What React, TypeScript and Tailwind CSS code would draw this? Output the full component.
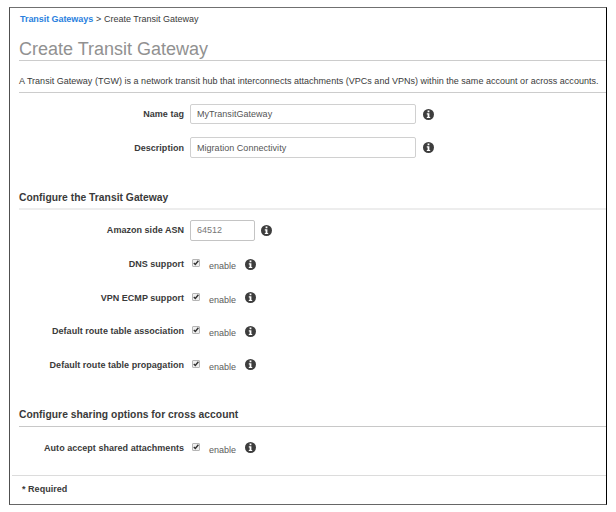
import type { ReactNode } from "react";

function InfoIcon({ className = "" }: { className?: string }) {
  return (
    <svg viewBox="0 0 11 11" className={`h-[11px] w-[11px] shrink-0 ${className}`} aria-label="Info">
      <circle cx="5.5" cy="5.5" r="5.5" fill="#3d3d3d" />
      <path d="M4.6 1.6h1.8v1.6H4.6zM3.8 4.2h2.6v3.7h.8v1.2H3.8V7.9h.8V5.4h-.8z" fill="#fff" />
    </svg>
  );
}

function Row({ label, height = "h-[20px]", children }: { label: string; height?: string; children: ReactNode }) {
  return (
    <div className={`flex items-center ${height}`}>
      <div className="w-[174px] shrink-0 text-right font-bold tracking-[0.03px]">{label}</div>
      <div className="ml-[6px] flex h-full items-center">{children}</div>
    </div>
  );
}

function TextRow({ label, value, height }: { label: string; value: string; height?: string }) {
  return (
    <Row label={label} height={height}>
      <div className="flex h-full w-[226px] items-center rounded-[2px] border border-[#d0d0d0] pl-[6px] tracking-[0.03px] text-[#555]">
        {value}
      </div>
      <InfoIcon className="ml-[7px]" />
    </Row>
  );
}

function CheckRow({ label }: { label: string }) {
  return (
    <Row label={label}>
      <svg viewBox="0 0 8 8" className="mb-[2px] ml-[2px] h-[8px] w-[8px] shrink-0">
        <rect x=".5" y=".5" width="7" height="7" rx=".5" fill="#efefef" stroke="#b5b5b5" />
        <path d="M1.8 4.1 3.3 5.5 6.4 1.8" fill="none" stroke="#303030" strokeWidth="1.4" />
      </svg>
      <span className="relative top-[2px] ml-[9px] w-[27px] text-[#5c5c5c]">enable</span>
      <InfoIcon className="ml-[9px]" />
    </Row>
  );
}

export default function App() {
  return (
    <div className="h-[512px] w-[616px] overflow-hidden bg-white pl-[9px] pt-[7px]">
      <main className="h-[498px] w-[598px] border border-t-[#707070] border-r-black border-b-[#666] border-l-[#505050] font-['Liberation_Sans',Arial,sans-serif] text-[9px] leading-[12px] whitespace-nowrap text-[#3a3a3a]">
        <nav className="ml-[10px] flex h-[22px] items-center">
          <a className="w-[76px] font-bold tracking-[-0.06px] text-[#2a7fde]">Transit Gateways</a>
          <span className="w-[8px]">&gt;</span>
          <span>Create Transit Gateway</span>
        </nav>
        <h1 className="ml-[9px] flex h-[31px] items-center border-b border-[#ccc] pt-[7px] text-[18px] text-[#919191]">
          Create Transit Gateway
        </h1>
        <p className="ml-[9px] flex h-[32px] items-center border-b border-[#ccc] pt-[8px] tracking-[0.02px]">
          A Transit Gateway (TGW) is a network transit hub that interconnects attachments (VPCs and VPNs) within the same account or across accounts.
        </p>
        <section className="flex flex-col gap-[13px] pt-[11px]">
          <TextRow label="Name tag" value="MyTransitGateway" />
          <TextRow label="Description" value="Migration Connectivity" height="h-[21px]" />
        </section>
        <h2 className="mt-[32px] ml-[9px] h-[20px] border-b-2 border-[#ededed] pt-[2px] text-[10.3px] font-bold tracking-[0.02px]">
          Configure the Transit Gateway
        </h2>
        <section className="flex flex-col gap-[13.5px] pt-[10px]">
          <Row label="Amazon side ASN" height="h-[20.7px]">
            <div className="flex h-full w-[65px] items-center rounded-[2px] border border-[#c4c4c4] pl-[6px] text-[#777]">
              64512
            </div>
            <InfoIcon className="ml-[6px]" />
          </Row>
          <CheckRow label="DNS support" />
          <CheckRow label="VPN ECMP support" />
          <CheckRow label="Default route table association" />
          <CheckRow label="Default route table propagation" />
        </section>
        <h2 className="mt-[32.3px] ml-[9px] h-[20px] border-b border-[#c8c8c8] pt-[2px] text-[10.3px] font-bold tracking-[0.03px]">
          Configure sharing options for cross account
        </h2>
        <section className="pt-[11px]">
          <CheckRow label="Auto accept shared attachments" />
        </section>
        <footer className="mt-[17px] ml-[2px] border-t border-[#dcdcdc] pt-[7px] pl-[10px] font-bold tracking-[0.03px]">
          * Required
        </footer>
      </main>
    </div>
  );
}
